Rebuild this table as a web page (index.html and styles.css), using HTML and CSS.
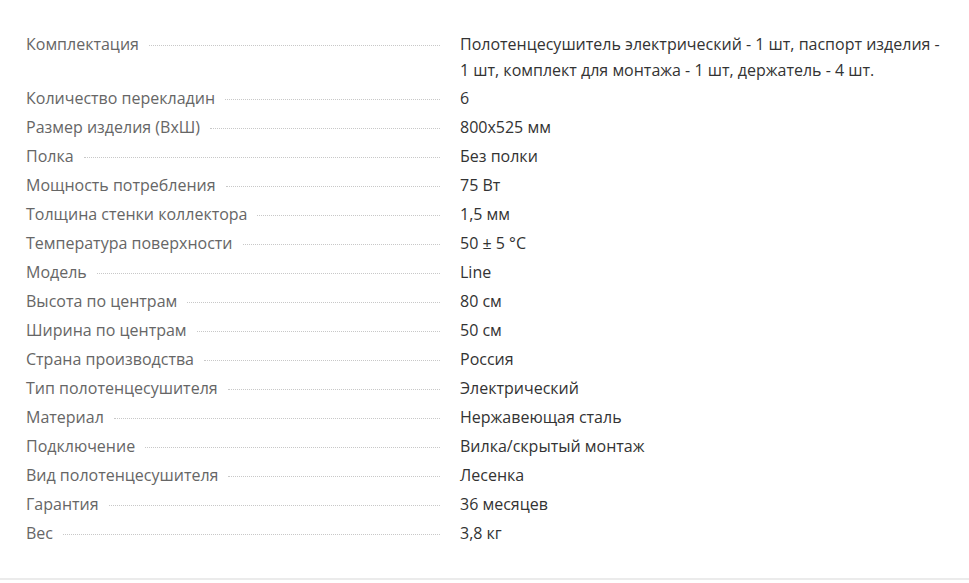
FILE: index.html
```html
<!DOCTYPE html>
<html lang="ru">
<head>
<meta charset="utf-8">
<link rel="stylesheet" href="styles.css">
</head>
<body>
<div class="page">
  <div class="specs">
    <div class="row first"><div class="name"><span>Комплектация</span></div><div class="val">Полотенцесушитель электрический - 1 шт, паспорт изделия - 1 шт, комплект для монтажа - 1 шт, держатель - 4 шт.</div></div>
    <div class="row"><div class="name"><span>Количество перекладин</span></div><div class="val">6</div></div>
    <div class="row"><div class="name"><span>Размер изделия (ВхШ)</span></div><div class="val">800x525 мм</div></div>
    <div class="row"><div class="name"><span>Полка</span></div><div class="val">Без полки</div></div>
    <div class="row"><div class="name"><span>Мощность потребления</span></div><div class="val">75 Вт</div></div>
    <div class="row"><div class="name"><span>Толщина стенки коллектора</span></div><div class="val">1,5 мм</div></div>
    <div class="row"><div class="name"><span>Температура поверхности</span></div><div class="val">50 ± 5 °С</div></div>
    <div class="row"><div class="name"><span>Модель</span></div><div class="val">Line</div></div>
    <div class="row"><div class="name"><span>Высота по центрам</span></div><div class="val">80 см</div></div>
    <div class="row"><div class="name"><span>Ширина по центрам</span></div><div class="val">50 см</div></div>
    <div class="row"><div class="name"><span>Страна производства</span></div><div class="val">Россия</div></div>
    <div class="row"><div class="name"><span>Тип полотенцесушителя</span></div><div class="val">Электрический</div></div>
    <div class="row"><div class="name"><span>Материал</span></div><div class="val">Нержавеющая сталь</div></div>
    <div class="row"><div class="name"><span>Подключение</span></div><div class="val">Вилка/скрытый монтаж</div></div>
    <div class="row"><div class="name"><span>Вид полотенцесушителя</span></div><div class="val">Лесенка</div></div>
    <div class="row"><div class="name"><span>Гарантия</span></div><div class="val">36 месяцев</div></div>
    <div class="row"><div class="name"><span>Вес</span></div><div class="val">3,8 кг</div></div>
  </div>
</div>
</body>
</html>
```

FILE: styles.css
```css
html, body {
  margin: 0;
  padding: 0;
  background: #fff;
}
.page {
  width: 969px;
  height: 580px;
  box-sizing: border-box;
  padding: 31px 24px 0 26px;
  border-bottom: 2px solid #ebebeb;
  font-family: "Open Sans", "Noto Sans", sans-serif;
  font-size: 16px;
  line-height: 26px;
}
.specs {
  display: flex;
  flex-direction: column;
  gap: 3px;
}
.row {
  display: flex;
  gap: 20px;
}
.row.first {
  margin-bottom: -1px;
}
.name {
  flex: 0 0 414px;
  display: flex;
  align-items: baseline;
  color: #666;
}
.name::after {
  content: "";
  flex: 1;
  margin-left: 10px;
  border-bottom: 1px dotted #c8c8c8;
  transform: translateY(-4px);
}
.val {
  flex: 1;
  color: #333;
}
```
